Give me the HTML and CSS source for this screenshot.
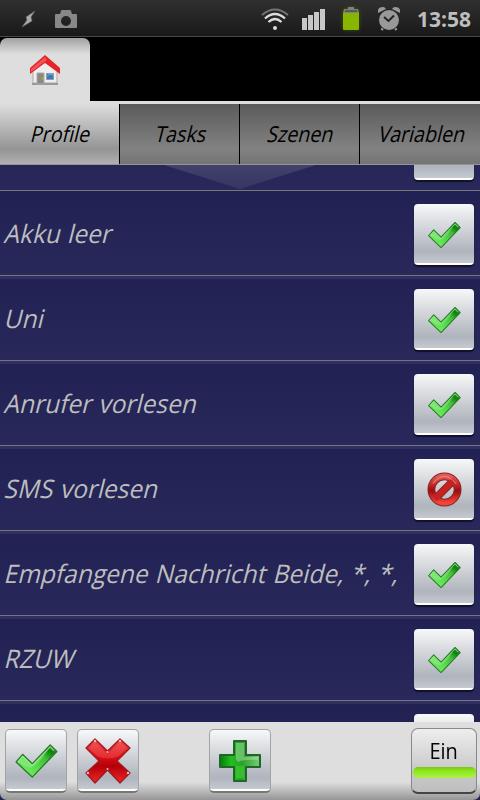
FILE: index.html
```html
<!DOCTYPE html>
<html lang="de">
<head>
<meta charset="utf-8">
<title>Profile</title>
<link rel="stylesheet" href="styles.css">
</head>
<body>
<svg class="defs" width="0" height="0" aria-hidden="true">
<defs>
<linearGradient id="green" x1="0" y1="1" x2="1" y2="0"><stop offset="0" stop-color="#91ee7b"/><stop offset=".4" stop-color="#55e04a"/><stop offset=".65" stop-color="#42bd38"/><stop offset=".82" stop-color="#078507"/><stop offset="1" stop-color="#58ad50"/></linearGradient>
<linearGradient id="red" x1="0" y1="0" x2="0" y2="1"><stop offset="0" stop-color="#ee4b4b"/><stop offset=".4" stop-color="#d80f16"/><stop offset=".62" stop-color="#b40008"/><stop offset="1" stop-color="#ed2929"/></linearGradient>
<linearGradient id="ring" x1="0" y1="0" x2="0" y2="1"><stop offset="0" stop-color="#e35a55"/><stop offset=".3" stop-color="#c52a28"/><stop offset=".55" stop-color="#9c0c0e"/><stop offset="1" stop-color="#f0453c"/></linearGradient>
<linearGradient id="plus" x1="0" y1="0" x2="1" y2="0"><stop offset="0" stop-color="#047e08"/><stop offset=".28" stop-color="#24be20"/><stop offset=".55" stop-color="#2ba02b"/><stop offset="1" stop-color="#7bce76"/></linearGradient>
<symbol id="check" viewBox="0 0 46 38"><path d="M2 20L9 12L19 22L38 2L45 9L19 36Z" fill="url(#green)" stroke="#277b27" stroke-width="1.4" stroke-linejoin="round"/><path d="M4 20L9 14L19 24L38 4L42 8" fill="none" stroke="#b4e9ad" stroke-width="1.2" opacity=".8"/><path d="M5 20L9 15L19 25L35 8Q29 20 18 26Q11 25 5 20" fill="#fff" opacity=".2"/></symbol>
<symbol id="deny" viewBox="0 0 36 36"><circle cx="18" cy="18" r="13.500" fill="none" stroke="#8d2426" stroke-width="8"/><path d="M8.500 27.500L27.500 8.500" stroke="#8d2426" stroke-width="8"/><circle cx="18" cy="18" r="13.500" fill="none" stroke="url(#ring)" stroke-width="6"/><path d="M8 28L28 8" stroke="#c82220" stroke-width="6"/><path d="M6 12Q18-3 30 12" fill="none" stroke="#f08a84" stroke-width="1.200" opacity=".7"/></symbol>
</defs>
</svg>
<div class="screen">
<header class="status">
<svg class="bolt" width="16" height="18" viewBox="0 0 16 18"><path d="M14 1L5 7L6 10L1 17L11 11L10 7Z" fill="#aaa" stroke="#666" stroke-width=".6"/></svg>
<svg class="camera" width="22" height="18" viewBox="0 0 22 18"><path fill="#888" fill-rule="evenodd" d="M1 4H5L6 1Q6 0 7 0H15Q16 0 16 1L17 4H21Q22 4 22 5V17Q22 18 21 18H1Q0 18 0 17V5Q0 4 1 4ZM11 6A5 5 0 1 0 11 16A5 5 0 1 0 11 6Z"/></svg>
<svg class="wifi" width="28" height="22" viewBox="0 0 28 22" fill="none" stroke-width="2"><path d="M1 7Q14-4 27 7" stroke="#747474"/><path d="M4 10.500Q14 1.500 24 10.500M7.500 14Q14 8 20.500 14" stroke="#ddd" stroke-width="2.300"/><circle cx="14" cy="20" r="2" fill="#ddd"/></svg>
<svg class="signal" width="23" height="21" viewBox="0 0 23 21" fill="#c7c7c7"><path d="M0 9H5V21H0ZM6 6H11V21H6ZM12 3H17V21H12ZM18 0H23V21H18Z"/></svg>
<svg class="battery" width="16" height="23" viewBox="0 0 16 23"><path d="M5 0H11V2H15L16 6H0L1 2H5Z" fill="#808080"/><path d="M2 4H14" stroke="#333"/><path d="M0 6H16V22Q16 23 15 23H1Q0 23 0 22Z" fill="#87b500"/></svg>
<svg class="alarm" width="22" height="24" viewBox="0 0 22 24" fill="#999"><path d="M0 6Q-1 0 5 0Q7 0 8 2ZM22 6Q23 0 17 0Q15 0 14 2Z"/><path d="M6 20L3.500 23M16 20L18.500 23" stroke="#999" stroke-width="2.500"/><circle cx="11" cy="13" r="10.700" fill="#242424"/><circle cx="11" cy="13" r="10"/><path d="M6 10L10.500 14L16 8.500" fill="none" stroke="#242424" stroke-width="2"/></svg>
<span class="clock">13:58</span>
</header>
<div class="home-strip"><div class="home-tab">
<svg width="32" height="32" viewBox="0 0 32 32"><path d="M4 15L16 4L28 15V28H4Z" fill="#eee" stroke="#aaa"/><path d="M3 29H29" stroke="#999" stroke-width="2"/><path d="M8 18H15V29H8Z" fill="#878b80" stroke="#aaa"/><path d="M17.500 18.500H24.500V24.500H17.500Z" fill="#397abb" stroke="#8d9da8"/><path d="M18 21Q21 18 24 20" stroke="#73a6dc" fill="none"/><circle cx="13.500" cy="23.500" r="1" fill="#c5aa26"/><path d="M1 13L16 0L31 13V19L16 8L1 19Z" fill="#e52428"/><path d="M2 14L16 2L18 5L2 17Z" fill="#f05457"/></svg>
</div></div>
<nav class="tabs"><div class="tab active"><span>Profile</span></div><div class="tab"><span>Tasks</span></div><div class="tab"><span>Szenen</span></div><div class="tab"><span>Variablen</span></div></nav>
<main class="list">
<div class="pull"></div>
<div class="row first"><span></span><div class="key"></div></div>
<div class="row"><span>Akku leer</span><div class="key"><svg class="ck"><use href="#check"/></svg></div></div>
<div class="row edged"><span>Uni</span><div class="key"><svg class="ck"><use href="#check"/></svg></div></div>
<div class="row edged"><span>Anrufer vorlesen</span><div class="key"><svg class="ck"><use href="#check"/></svg></div></div>
<div class="row edged"><span>SMS vorlesen</span><div class="key"><svg class="no"><use href="#deny"/></svg></div></div>
<div class="row edged"><span>Empfangene Nachricht Beide, *, *,</span><div class="key"><svg class="ck"><use href="#check"/></svg></div></div>
<div class="row edged"><span>RZUW</span><div class="key"><svg class="ck"><use href="#check"/></svg></div></div>
<div class="row edged"><span></span><div class="key"></div></div>
</main>
<div class="dock"><footer class="bar">
<div class="button"><svg width="46" height="36"><use href="#check"/></svg></div>
<div class="button second"><svg width="46" height="46" viewBox="0 0 46 46"><path d="M1 10L10 1L22.500 13L35 1L45 10L32 23L45 35L35 45L22.500 32L10 45L1 35L14 23Z" fill="url(#red)" stroke="#a01820" stroke-width="1.200" stroke-linejoin="round"/><path d="M4 10L10 4L22.500 16L35 4L42 10L34 18Q23 23 12 18Z" fill="#ff7777" opacity=".3"/><g fill="#ffb4b4"><circle cx="10" cy="3" r="1.200"/><circle cx="35" cy="3" r="1.200"/><circle cx="3" cy="35" r="1.200"/><circle cx="43" cy="35" r="1.200"/><circle cx="22.500" cy="14" r="1"/><circle cx="22.500" cy="31" r="1"/></g></svg></div>
<div class="button third"><svg width="42" height="42" viewBox="0 0 42 42"><path d="M15 1H27V15H41V27H27V41H15V27H1V15H15Z" fill="url(#plus)" stroke="#20662a" stroke-width="2" stroke-linejoin="round"/><path d="M17 3H25V17H39V20Q25 19 19 22L17 19Z" fill="#c8ecc6" opacity=".4"/><path d="M17 26H25V38H17Z" fill="#45dc32" opacity=".45"/></svg></div>
<div class="toggle"><span>Ein</span><i></i></div>
</footer></div>
</div>
</body>
</html>
```
FILE: styles.css
```css
* { box-sizing: border-box; }
body { margin: 0; background: #000; font-family: "Open Sans", sans-serif; }
.defs { position: absolute; }
svg { display: block; flex: none; }
.screen { width: 480px; height: 800px; overflow: hidden; display: flex; flex-direction: column; }
.status { height: 37px; flex: none; display: flex; padding-left: 21px; background: linear-gradient(#303030, #191919); border-bottom: 1px solid #484848; }
.bolt { margin-top: 10px; }
.camera { margin: 10px 0 0 18px; }
.wifi { margin: 8px 0 0 184px; }
.signal { margin: 9px 0 0 13px; }
.battery { margin: 7px 0 0 18px; filter: drop-shadow(0 0 2px #405600); }
.alarm { margin: 7px 0 0 19px; }
.clock { margin: 6px 0 0 17px; font-size: 21px; line-height: 27px; font-weight: 700; color: #bebebe; white-space: nowrap; }
.home-strip { height: 64px; flex: none; padding-top: 1px; }
.home-tab { width: 90px; height: 63px; border-radius: 7px 7px 0 0; background: linear-gradient(#a1a1a1, #dedede 16px); padding: 17px 0 0 29px; }
.tabs { height: 64px; flex: none; display: grid; grid-template-columns: repeat(4, 120px); border-top: 3px solid #dedede; border-bottom: 1px solid #949494; }
.tab { display: flex; justify-content: center; background: linear-gradient(#5b5b5b, #828282 75%, #747474); border-right: 1px solid #000; line-height: 58px; font-size: 22px; color: #000; padding-left: 4px; }
.tab:last-child { border: 0; }
.tab.active { background: linear-gradient(#dedede, #949494 75%, #b1b1b1); }
.tab span { transform: skewX(-14deg) scaleX(.893); white-space: nowrap; }
.list { height: 557px; flex: none; overflow: hidden; position: relative; background: #242556; }
.row { height: 85px; display: flex; justify-content: space-between; padding: 13px 6px 0 0; background: linear-gradient(#212153, #28285a); border-bottom: 1px solid #76767a; }
.row.edged { background: linear-gradient(#2f2f62 3px, #212153 3px, #28285a); }
.row.first { margin-top: -59px; }
.row span { flex: 0 1 auto; min-width: 0; font-size: 25.5px; line-height: 34px; margin-top: 12px; color: #bdbdbd; white-space: nowrap; word-spacing: 1px; transform: skewX(-14deg) scaleX(.96); transform-origin: 0 75%; margin-left: -1px; }
.pull { position: absolute; top: 0; left: 164px; width: 152px; height: 24px; clip-path: polygon(0 0, 100% 0, 50% 100%); background: linear-gradient(#41416b, #363663); }
.key { width: 60px; height: 61px; flex: none; border-radius: 4px; display: flex; align-items: center; justify-content: center; background: linear-gradient(#f7f8f9, #cdd0d5 45%, #afb4bd 78%, #c5c8cf 96%, #fff 97%); box-shadow: 0 2px 1px #101129; }
.ck { width: 34px; height: 28px; }
.no { width: 35px; height: 35px; }
.dock { flex: 1; background: #242556; }
.bar { height: 78px; display: flex; padding: 6px 3px 0 5px; border-radius: 0 0 7px 7px; background: linear-gradient(#dedede 60px, #969696); }
.button { width: 62px; height: 64px; margin-top: 1px; border: 1px solid #a3a3a5; border-bottom: 2px solid #777; border-radius: 5px; background: linear-gradient(#f7f8f9, #cdd0d5 45%, #afb4bd 78%, #c5c8cf 96%, #fff 97%); display: flex; align-items: center; justify-content: center; }
.second { margin-left: 10px; }
.third { margin-left: 70px; }
.toggle { margin-left: auto; width: 66px; height: 66px; border: 1px solid #888; border-bottom: 2px solid #444; border-radius: 7px; background: linear-gradient(#eee, #cdcdcd 58%, #bebebe); display: flex; flex-direction: column; align-items: center; }
.toggle span { height: 38px; font-size: 22px; line-height: 42px; transform: scaleX(.91); color: #000; }
.toggle i { width: 63px; height: 11px; border-radius: 5px; background: linear-gradient(#77c817, #8fe718 35%, #abf14d); }
```
